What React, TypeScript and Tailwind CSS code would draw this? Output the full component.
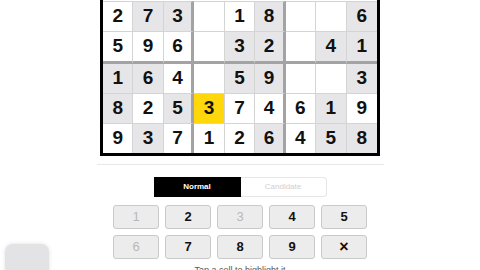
const rows: { v: string; s: 0 | 1 | 2 }[][] = [
  [
    { v: "2", s: 0 }, { v: "7", s: 1 }, { v: "3", s: 1 },
    { v: "", s: 0 }, { v: "1", s: 0 }, { v: "8", s: 1 },
    { v: "", s: 0 }, { v: "", s: 0 }, { v: "6", s: 1 },
  ],
  [
    { v: "5", s: 0 }, { v: "9", s: 0 }, { v: "6", s: 0 },
    { v: "", s: 0 }, { v: "3", s: 1 }, { v: "2", s: 1 },
    { v: "", s: 0 }, { v: "4", s: 1 }, { v: "1", s: 1 },
  ],
  [
    { v: "1", s: 1 }, { v: "6", s: 1 }, { v: "4", s: 0 },
    { v: "", s: 0 }, { v: "5", s: 1 }, { v: "9", s: 1 },
    { v: "", s: 0 }, { v: "", s: 0 }, { v: "3", s: 1 },
  ],
  [
    { v: "8", s: 1 }, { v: "2", s: 0 }, { v: "5", s: 1 },
    { v: "3", s: 2 }, { v: "7", s: 0 }, { v: "4", s: 0 },
    { v: "6", s: 0 }, { v: "1", s: 1 }, { v: "9", s: 0 },
  ],
  [
    { v: "9", s: 0 }, { v: "3", s: 1 }, { v: "7", s: 0 },
    { v: "1", s: 0 }, { v: "2", s: 0 }, { v: "6", s: 1 },
    { v: "4", s: 0 }, { v: "5", s: 1 }, { v: "8", s: 1 },
  ],
];

// height + bottom border for each visible row
const rowClass = [
  "h-[31px] border-t border-b border-[#d4d4d4]",
  "h-[32px] border-b-[3px] border-b-[#a3a3a3]",
  "h-[30px] border-b border-[#d4d4d4]",
  "h-[30px] border-b border-[#d4d4d4]",
  "h-[29px]",
];

const keys = [
  { label: "1", off: true },
  { label: "2", off: false },
  { label: "3", off: true },
  { label: "4", off: false },
  { label: "5", off: false },
  { label: "6", off: true },
  { label: "7", off: false },
  { label: "8", off: false },
  { label: "9", off: false },
  { label: "×", off: false },
];

const Cell = ({ v, s, col, row }: { v: string; s: 0 | 1 | 2; col: number; row: number }) => {
  const bg = s === 2 ? "bg-[#ffd70a]" : s === 1 ? "bg-[#e6e6e8]" : "bg-white";
  const right =
    col === 8
      ? ""
      : col === 2 || col === 5
      ? "border-r-[3px] border-r-[#a3a3a3]"
      : "border-r border-r-[#d4d4d4]";
  return (
    <div
      className={`${rowClass[row]} ${right} ${bg} flex items-center justify-center text-[19px] font-bold text-[#111]`}
    >
      {v}
    </div>
  );
};

export default function App() {
  return (
    <div
      className="relative h-[270px] w-[480px] overflow-hidden bg-white"
      style={{ fontFamily: '"Liberation Sans", Arial, sans-serif' }}
    >
      <div className="mx-auto w-[280px] border-x-[3px] border-b-[3px] border-black pt-px">
        {rows.map((r, ri) => (
          <div key={ri} className="grid grid-cols-9">
            {r.map((c, ci) => (
              <Cell key={ci} v={c.v} s={c.s} col={ci} row={ri} />
            ))}
          </div>
        ))}
      </div>

      <div className="mx-auto mt-[8px] h-px w-[287px] bg-[#e8e8e8]" />

      <div className="mx-auto mt-[12px] flex h-[20px] w-[173px]">
        <div className="flex w-[87px] items-center justify-center bg-black text-[8px] font-bold text-white">
          Normal
        </div>
        <div className="flex flex-1 items-center justify-center rounded-r-sm border border-l-0 border-[#e6e6e6] text-[8px] text-[#cfcfcf]">
          Candidate
        </div>
      </div>

      <div className="mx-auto mt-[8px] grid w-[254px] grid-cols-5 gap-x-[6px] gap-y-[6px]">
        {keys.map((k) => (
          <div
            key={k.label}
            className={`flex h-[24px] items-center justify-center rounded-[3px] border border-[#c9c9c9] bg-[#ececec] ${
              k.label === "×" ? "text-[16px]" : "text-[13px]"
            } ${k.off ? "font-normal text-[#b8b8b8]" : "font-bold text-[#111]"}`}
          >
            {k.label}
          </div>
        ))}
      </div>

      <div className="mt-[6px] text-center text-[9px] leading-[10px] text-[#555]">
        Tap a cell to highlight it
      </div>

      <div className="absolute left-[5px] top-[244px] h-[40px] w-[44px] rounded-[8px] bg-[#e3e3e5] shadow-[0_0_4px_rgba(0,0,0,0.12)]" />
    </div>
  );
}
